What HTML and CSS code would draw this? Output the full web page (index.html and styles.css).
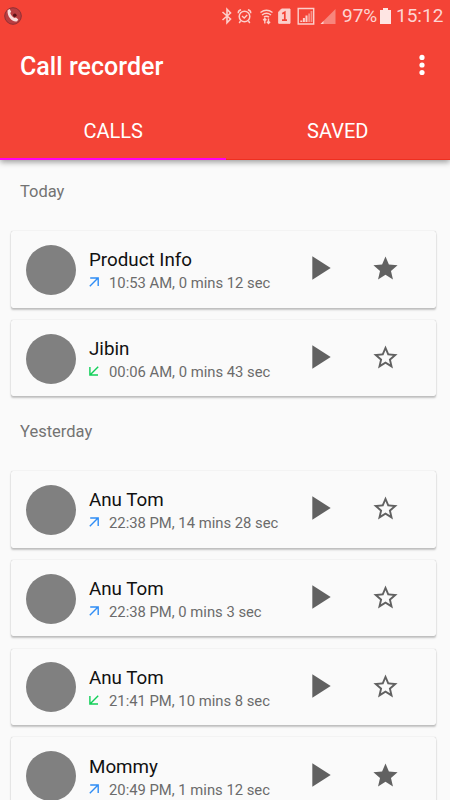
FILE: index.html
```html
<!DOCTYPE html>
<html lang="en">
<head>
    <meta charset="UTF-8">
    <meta name="viewport" content="width=device-width, initial-scale=1.0">
    <title>Call recorder</title>
    <link rel="stylesheet" href="styles.css">
</head>
<body>

<svg class="symbols" aria-hidden="true">
    <symbol id="play" viewBox="0 0 24 24"><path d="M8 5v14l11-7z"/></symbol>
    <symbol id="star" viewBox="0 0 24 24"><path d="M12 17.27L18.18 21l-1.64-7.03L22 9.24l-7.19-.61L12 2 9.19 8.63 2 9.24l5.46 4.73L5.82 21z"/></symbol>
    <symbol id="star-border" viewBox="0 0 24 24"><path d="M22 9.24l-7.19-.62L12 2 9.19 8.63 2 9.24l5.46 4.73L5.82 21 12 17.27 18.18 21l-1.63-7.03L22 9.24zM12 15.4l-3.76 2.27 1-4.28-3.32-2.88 4.38-.38L12 6.1l1.71 4.04 4.38.38-3.32 2.88 1 4.28L12 15.4z"/></symbol>
    <symbol id="call-out" viewBox="0 0 10 10"><path d="M.8 9.3L9 1.1M1.2 1H9.2V9"/></symbol>
    <symbol id="call-in" viewBox="0 0 10 10"><path d="M9.2.8L1 9M.9 1V9H9"/></symbol>
</svg>

<header>
    <div class="status-bar">
        <svg class="app-icon" width="18" height="18" viewBox="0 0 18 18">
            <circle cx="9" cy="9" r="8.3" fill="#b93e42" stroke="#8f3034" stroke-width="1"/>
            <circle cx="10.8" cy="8.2" r="1.8" fill="#5c1218"/>
            <path d="M3.6 3.2l2-1.1 1.6 2.6-1 1.4c.7 2 2.1 3.7 4.2 5l1.600-.6 2.300 2-1.200 1.700C8.500 15.600 2.900 9.800 3.600 3.200z" fill="#f8dcdc"/>
        </svg>
        <svg class="status-icons" width="120" height="20" viewBox="0 0 120 20" fill="none" stroke="#fccfcb">
            <!-- bluetooth -->
            <path d="M1.5 6L9.5 13L6 16.7V3.3L9.5 7L1.5 14" stroke-width="1.6"/>
            <!-- alarm -->
            <circle cx="23.5" cy="10.5" r="5.3" stroke-width="1.5"/>
            <path d="M17.2 7.2c0-2 1-3.2 2.9-3.5M29.8 7.2c0-2-1-3.2-2.9-3.5M19.5 15l-1.3 2M27.5 15l1.3 2M21 10l2.2 2 3-3" stroke-width="1.4"/>
            <!-- wifi -->
            <path d="M39.500 6.500q6-4.500 12 0M41 9q4.500-3.300 9 0M43 11.200q2.500-1.800 5 0" stroke-width="1.500"/>
            <path d="M43.800 17.500v-5M47.500 12.500v5M42.200 14.200l1.600-1.700 1.600 1.700M45.900 15.800l1.600 1.700 1.600-1.700" stroke-width="1.400"/>
            <!-- sim -->
            <path d="M60.500 3h8.500v14.300H57.700V6z" fill="#fccfcb" stroke-linejoin="round" stroke-width="1"/>
            <path d="M61.200 7.800l2.600-1.500v7.500M61 14.200h5" stroke="#f44336" stroke-width="1.700"/>
            <!-- boxed signal -->
            <path d="M77.2 2.500h15.500v15.500H77.200z" stroke-width="1.400"/>
            <path d="M80.300 16v-1.500M82.900 16v-4M85.500 16v-6.500" stroke-width="2"/>
            <path d="M88.100 16V7.500M90.500 16V5" stroke-width="1.800" opacity=".55"/>
            <!-- signal -->
            <path d="M99.500 18L114.500 3v15z" fill="#f8857c" stroke="none"/>
            <path d="M99.500 18l3-3V18z" fill="#fccfcb" stroke="none"/>
        </svg>
        <span class="battery-level">97%</span>
        <svg class="battery" width="11" height="16" viewBox="0 0 11 16"><path d="M3 0h5v2h3v14H0V2h3z" fill="#fee5e3"/></svg>
        <span class="clock">15:12</span>
    </div>
    <div class="toolbar">
        <h1>Call recorder</h1>
        <svg class="menu" width="6" height="22" viewBox="0 0 6 22" fill="#fff">
            <circle cx="3" cy="3.4" r="2.6"/>
            <circle cx="3" cy="11" r="2.6"/>
            <circle cx="3" cy="18.5" r="2.6"/>
        </svg>
    </div>
    <nav class="tabs">
        <a class="tab active">CALLS</a>
        <a class="tab">SAVED</a>
    </nav>
</header>

<main>
    <section>
        <h2>Today</h2>
        <div class="card">
            <div class="avatar"></div>
            <div class="info">
                <div class="name">Product Info</div>
                <div class="meta"><svg class="arrow out"><use href="#call-out"/></svg><span>10:53 AM, 0 mins 12 sec</span></div>
            </div>
            <svg class="play"><use href="#play"/></svg>
            <svg class="star"><use href="#star"/></svg>
        </div>
        <div class="card">
            <div class="avatar"></div>
            <div class="info">
                <div class="name">Jibin</div>
                <div class="meta"><svg class="arrow in"><use href="#call-in"/></svg><span>00:06 AM, 0 mins 43 sec</span></div>
            </div>
            <svg class="play"><use href="#play"/></svg>
            <svg class="star"><use href="#star-border"/></svg>
        </div>
    </section>

    <section>
        <h2>Yesterday</h2>
        <div class="card">
            <div class="avatar"></div>
            <div class="info">
                <div class="name">Anu Tom</div>
                <div class="meta"><svg class="arrow out"><use href="#call-out"/></svg><span>22:38 PM, 14 mins 28 sec</span></div>
            </div>
            <svg class="play"><use href="#play"/></svg>
            <svg class="star"><use href="#star-border"/></svg>
        </div>
        <div class="card">
            <div class="avatar"></div>
            <div class="info">
                <div class="name">Anu Tom</div>
                <div class="meta"><svg class="arrow out"><use href="#call-out"/></svg><span>22:38 PM, 0 mins 3 sec</span></div>
            </div>
            <svg class="play"><use href="#play"/></svg>
            <svg class="star"><use href="#star-border"/></svg>
        </div>
        <div class="card">
            <div class="avatar"></div>
            <div class="info">
                <div class="name">Anu Tom</div>
                <div class="meta"><svg class="arrow in"><use href="#call-in"/></svg><span>21:41 PM, 10 mins 8 sec</span></div>
            </div>
            <svg class="play"><use href="#play"/></svg>
            <svg class="star"><use href="#star-border"/></svg>
        </div>
        <div class="card">
            <div class="avatar"></div>
            <div class="info">
                <div class="name">Mommy</div>
                <div class="meta"><svg class="arrow out"><use href="#call-out"/></svg><span>20:49 PM, 1 mins 12 sec</span></div>
            </div>
            <svg class="play"><use href="#play"/></svg>
            <svg class="star"><use href="#star"/></svg>
        </div>
    </section>
</main>

</body>
</html>
```
FILE: styles.css
```css
* {
    box-sizing: border-box;
}
body {
    font-family: Roboto, "Liberation Sans", sans-serif;
    background-color: #fafafa;
    margin: 0;
    height: 800px;
    overflow: hidden;
    display: flex;
    flex-direction: column;
}
svg {
    display: block;
    flex: none;
}
.symbols {
    width: 0;
    height: 0;
    position: absolute;
}
header {
    flex: none;
    height: 160px;
    background-color: #f44336;
    color: white;
    box-shadow: 0 2px 6px rgba(0,0,0,0.4);
}
.status-bar {
    display: flex;
    align-items: center;
    height: 32px;
    padding: 0 7px 0 4px;
    color: #fdd5d2;
    font-size: 19px;
    line-height: 32px;
}
.status-icons {
    margin-left: auto;
    margin-right: 1px;
    margin-bottom: 1px;
}
.battery-level {
    width: 38px;
    white-space: nowrap;
}
.battery {
    margin-right: 5px;
}
.clock {
    width: 47px;
    white-space: nowrap;
}
.toolbar {
    display: flex;
    align-items: center;
    justify-content: space-between;
    height: 69px;
    padding: 0 25px 0 20px;
}
.menu {
    margin-bottom: 3px;
}
h1 {
    margin: 0;
    font-size: 25px;
    font-weight: 500;
    letter-spacing: 0.03px;
}
.tabs {
    display: flex;
    height: 59px;
}
.tab {
    flex: 1;
    text-align: center;
    font-size: 20px;
    line-height: 60px;
    border-bottom: 1px solid #ee2f20;
}
.tab.active {
    padding-left: 1px;
    border-bottom: 2px solid #ff00f0;
}
h2 {
    margin: 0;
    padding: 0 20px;
    height: 71px;
    font-size: 16.5px;
    font-weight: 400;
    line-height: 64px;
    color: #737373;
}
section + section h2 {
    height: 62.5px;
    line-height: 46px;
}
.card {
    display: flex;
    align-items: center;
    height: 76.5px;
    margin: 0 14px 12.3px 11px;
    padding: 0 36px 0 14.5px;
    border-radius: 2px;
    background-color: #fafafa;
    box-shadow: 0 0 1px rgba(0,0,0,0.3), 0 2px 2px rgba(0,0,0,0.22);
}
.avatar {
    flex: none;
    width: 50px;
    height: 50px;
    margin-top: 1px;
    border-radius: 50%;
    background-color: #808080;
}
.info {
    flex: 1;
    padding-top: 5px;
    padding-left: 13.5px;
}
.name {
    font-size: 18.8px;
    line-height: 24px;
    color: #111;
    white-space: nowrap;
}
.meta {
    display: flex;
    font-size: 14.8px;
    line-height: 23px;
    color: #6b6b6b;
    white-space: nowrap;
}
.arrow {
    width: 10px;
    height: 10px;
    margin: 5px 10px 0 0;
    fill: none;
    stroke-width: 1.4;
}
.arrow.out {
    stroke: #2f8df5;
}
.arrow.in {
    stroke: #10cf58;
}
.play {
    width: 40px;
    height: 40px;
    margin-right: 32px;
    margin-bottom: 2px;
    fill: #616161;
}
.star {
    width: 29px;
    height: 29px;
    margin-bottom: 1px;
    fill: #616161;
}
```
